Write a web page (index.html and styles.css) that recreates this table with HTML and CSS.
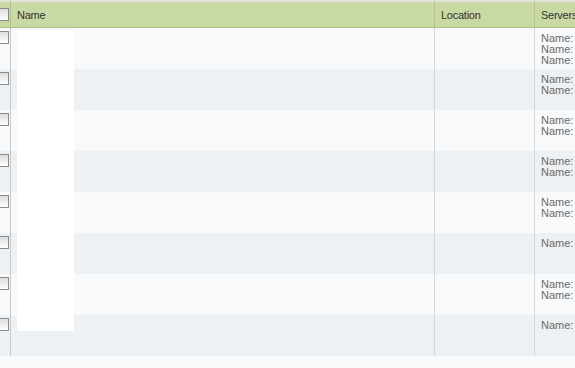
FILE: index.html
```html
<!DOCTYPE html>
<html>
<head>
<meta charset="utf-8">
<link rel="stylesheet" href="styles.css">
</head>
<body>
<div class="grid-wrap">
  <table class="grid">
    <colgroup>
      <col class="c-check"><col class="c-name"><col class="c-loc"><col class="c-srv">
    </colgroup>
    <thead>
      <tr>
        <th class="chk"><span class="box"></span></th>
        <th>Name</th>
        <th>Location</th>
        <th>Servers</th>
      </tr>
    </thead>
    <tbody>
      <tr class="odd"><td class="chk"><span class="box"></span></td><td></td><td></td><td class="srv">Name:<br>Name:<br>Name:</td></tr>
      <tr class="even"><td class="chk"><span class="box"></span></td><td></td><td></td><td class="srv">Name:<br>Name:</td></tr>
      <tr class="odd"><td class="chk"><span class="box"></span></td><td></td><td></td><td class="srv">Name:<br>Name:</td></tr>
      <tr class="even"><td class="chk"><span class="box"></span></td><td></td><td></td><td class="srv">Name:<br>Name:</td></tr>
      <tr class="odd"><td class="chk"><span class="box"></span></td><td></td><td></td><td class="srv">Name:<br>Name:</td></tr>
      <tr class="even"><td class="chk"><span class="box"></span></td><td></td><td></td><td class="srv">Name:</td></tr>
      <tr class="odd"><td class="chk"><span class="box"></span></td><td></td><td></td><td class="srv">Name:<br>Name:</td></tr>
      <tr class="even"><td class="chk"><span class="box"></span></td><td></td><td></td><td class="srv">Name:</td></tr>
    </tbody>
  </table>
  <div class="redact"></div>
</div>
</body>
</html>
```
FILE: styles.css
```css
html, body {
  margin: 0;
  padding: 0;
  overflow: hidden;
  background: #f8fafc;
}
body {
  font-family: "Liberation Sans", Arial, sans-serif;
  font-size: 11px;
}
.grid-wrap {
  position: relative;
  width: 600px;
}
.grid {
  border-collapse: separate;
  border-spacing: 0;
  table-layout: fixed;
  width: 600px;
}
.c-check { width: 11px; }
.c-name { width: 424px; }
.c-loc { width: 100px; }
.c-srv { width: 65px; }

.grid thead th {
  height: 28px;
  box-sizing: border-box;
  padding: 0 0 0 6px;
  text-align: left;
  font-weight: normal;
  color: #333;
  font-size: 11px;
  letter-spacing: -0.25px;
  background: #c9d9a3;
  border-top: 2px solid #e2e4dc;
  border-bottom: 1px solid #aebf84;
  border-right: 1px solid #b4c690;
  vertical-align: middle;
  white-space: nowrap;
  overflow: hidden;
}
.grid tbody td {
  height: 41px;
  box-sizing: border-box;
  padding: 5px 0 0 6px;
  vertical-align: top;
  border-right: 1px solid #d3d8dc;
  color: #6a6a6a;
  line-height: 11px;
  white-space: nowrap;
  overflow: hidden;
}
.grid tbody tr.odd td { background: #f7f9fb; }
.grid tbody tr.even td { background: #edf1f4; }
.grid tbody td.chk { border-right: 1px solid #c4c9cc; }
.grid thead th.chk { border-right: 1px solid #b0c088; }

.grid .chk {
  padding: 0;
  overflow: hidden;
}
.grid tbody .chk { padding-top: 3px; }

.box {
  display: block;
  width: 11px;
  height: 11px;
  margin-left: -4px;
  border: 1px solid #8a8a8a;
  background: linear-gradient(#dcdcdc, #ffffff);
  box-sizing: content-box;
}

.srv { padding-left: 6px; }

.redact {
  position: absolute;
  left: 17px;
  top: 30px;
  width: 57px;
  height: 301px;
  background: #ffffff;
}
```
